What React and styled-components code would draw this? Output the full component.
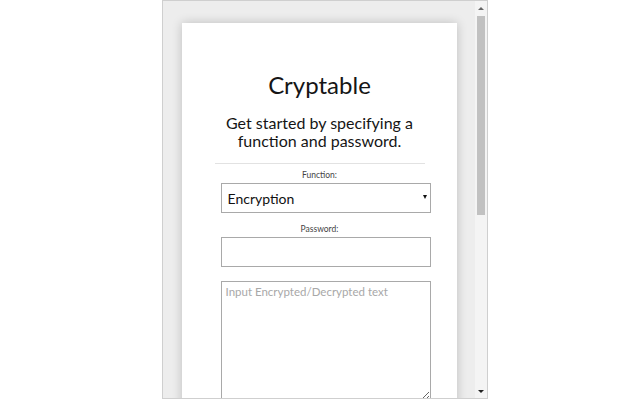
import React from "react";
import styled, { createGlobalStyle } from "styled-components";

const Global = createGlobalStyle`
  html, body { margin: 0; padding: 0; background: #fff; }
  body { font-family: Lato, "Open Sans", sans-serif; width: 640px; height: 400px; overflow: hidden; }
`;

const Page = styled.div`
  padding-left: 162px;
  display: flex;
`;

const Frame = styled.div`
  width: 324px;
  height: 397px;
  border: 1px solid #cfcfcf;
  display: flex;
`;

const Panel = styled.div`
  width: 312px;
  height: 100%;
  background: #ededed;
  overflow: hidden;
  padding: 22px 18px 0 19px;
  box-sizing: border-box;
`;

const Card = styled.div`
  background: #fff;
  height: 420px;
  box-shadow: 0 0 10px rgba(0, 0, 0, 0.2);
  display: flex;
  flex-direction: column;
  align-items: center;
  padding-top: 48px;
  box-sizing: border-box;
`;

const Title = styled.h1`
  margin: 0;
  font-weight: 400;
  font-size: 24px;
  line-height: 28px;
  color: #151515;
`;

const Subtitle = styled.h2`
  margin: 15px 0 0;
  font-weight: 400;
  font-size: 16px;
  line-height: 18px;
  color: #151515;
  text-align: center;
`;

const Rule = styled.hr`
  width: 210px;
  margin: 13px 0 0;
  border: 0;
  border-top: 1px solid #e2e2e2;
  align-self: center;
`;

const Field = styled.div`
  width: 210px;
  margin-left: 12px;
  display: flex;
  flex-direction: column;
  align-items: stretch;
  margin-top: ${(p) => p.$gap}px;
`;

const Label = styled.label`
  font-size: 8.5px;
  line-height: 10px;
  color: #444;
  text-align: center;
  margin-left: -12px;
  margin-bottom: 3px;
`;

const SelectWrap = styled.div`
  position: relative;
  height: 30px;
`;

const Select = styled.select`
  appearance: none;
  -webkit-appearance: none;
  width: 100%;
  height: 30px;
  border: 1px solid #a9a9a9;
  border-radius: 0;
  background: #fff;
  font-family: Lato, sans-serif;
  font-size: 14px;
  color: #111;
  padding: 0 0 0 6px;
  margin: 0;
  outline: none;
`;

const Arrow = styled.span`
  position: absolute;
  right: 4px;
  top: 12px;
  width: 0;
  height: 0;
  border-left: 2.5px solid transparent;
  border-right: 2.5px solid transparent;
  border-top: 4px solid #111;
  pointer-events: none;
`;

const Input = styled.input`
  width: 100%;
  height: 30px;
  box-sizing: border-box;
  border: 1px solid #a9a9a9;
  border-radius: 0;
  margin: 0;
  padding: 0 6px;
  font-family: Lato, sans-serif;
  outline: none;
`;

const TextArea = styled.textarea`
  width: 100%;
  height: 120px;
  box-sizing: border-box;
  border: 1px solid #a9a9a9;
  border-radius: 0;
  margin: 0;
  padding: 3px 4px;
  font-family: Lato, sans-serif;
  font-size: 11.5px;
  outline: none;
  &::placeholder { color: #a8a8a8; }
`;

const Scrollbar = styled.div`
  width: 12px;
  height: 100%;
  background: #f4f4f4;
  display: flex;
  flex-direction: column;
  align-items: center;
`;

const ArrowBtn = styled.div`
  height: 14px;
  width: 100%;
  display: flex;
  align-items: center;
  justify-content: center;
  &::after {
    content: "";
    border-left: 3px solid transparent;
    border-right: 3px solid transparent;
    ${(p) => (p.$down ? "border-top: 3px solid #222;" : "border-bottom: 3px solid #666;")}
  }
`;

const Thumb = styled.div`
  width: 8px;
  height: 199px;
  background: #c1c1c1;
  margin-top: 1px;
`;

const Track = styled.div`
  flex: 1;
`;

export default function App() {
  return (
    <>
      <Global />
      <Page>
        <Frame>
          <Panel>
            <Card>
              <Title>Cryptable</Title>
              <Subtitle>
                Get started by specifying a
                <br />
                function and password.
              </Subtitle>
              <Rule />
              <Field $gap={6}>
                <Label>Function:</Label>
                <SelectWrap>
                  <Select defaultValue="enc">
                    <option value="enc">Encryption</option>
                    <option value="dec">Decryption</option>
                  </Select>
                  <Arrow />
                </SelectWrap>
              </Field>
              <Field $gap={11}>
                <Label>Password:</Label>
                <Input type="password" />
              </Field>
              <Field $gap={14}>
                <TextArea placeholder="Input Encrypted/Decrypted text" />
              </Field>
            </Card>
          </Panel>
          <Scrollbar>
            <ArrowBtn />
            <Thumb />
            <Track />
            <ArrowBtn $down />
          </Scrollbar>
        </Frame>
      </Page>
    </>
  );
}
